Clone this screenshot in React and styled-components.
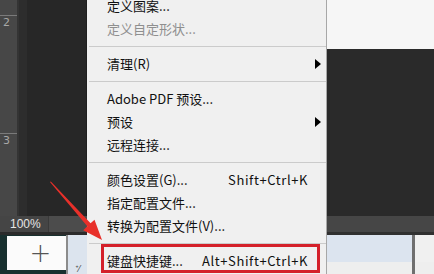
import React from "react";
import styled, { createGlobalStyle } from "styled-components";

const Global = createGlobalStyle`
  html, body { margin: 0; padding: 0; background: #262626; }
  #root { width: 434px; height: 274px; }
`;

const Screen = styled.div`
  position: relative;
  width: 434px;
  height: 274px;
  overflow: hidden;
  display: grid;
  grid-template-columns: 87px 240px 107px;
  font-family: "Noto Sans CJK SC", "Noto Sans", sans-serif;
`;

const LeftCol = styled.div`
  display: grid;
  grid-template-rows: 216px 16px 3px 1fr;
`;

const Workspace = styled.div`
  display: grid;
  grid-template-columns: 17px 2px 1fr 1px;
`;

const Ruler = styled.div`
  position: relative;
  background:
    repeating-linear-gradient(to bottom, transparent 0 11px, #6a6a6a 11px 12px) right 0 top 3px / 4px 100% no-repeat,
    #474747;
`;

const RulerMark = styled.div`
  height: ${(p) => p.$gap}px;
  border-top: 1px solid #7a7a7a;
  padding: 1px 0 0 3px;
  font-family: "DejaVu Sans", sans-serif;
  font-size: 11px;
  line-height: 11px;
  color: #a8a8a8;
  box-sizing: border-box;
`;

const RulerInner = styled.div`
  display: flex;
  flex-direction: column;
  padding-top: 15px;
  background: #474747;
  height: 100%;
  box-sizing: border-box;
`;

const Seam = styled.div`
  background: ${(p) => p.$c};
`;

const Canvas = styled.div`
  background: linear-gradient(to right, #2d2d2d 0 8px, #272727 8px);
`;

const StatusBar = styled.div`
  display: grid;
  grid-template-columns: 48px 1fr;
  background: #404040;
`;

const Zoom = styled.div`
  display: flex;
  align-items: center;
  padding-left: 10px;
  font-family: "Liberation Sans", sans-serif;
  font-size: 12px;
  color: #e6e6e6;
  background: #454545;
`;

const StatusBox = styled.div`
  background: #4c4c4c;
  border-left: 1px solid #3a3a3a;
`;

const Dock = styled.div`
  display: grid;
  grid-template-columns: 7px 59px 2px 1fr;
  background: #18302f;
`;

const NewTab = styled.div`
  margin: 1px 0 4px;
  background: #fbfbfb;
  display: flex;
  align-items: center;
  justify-content: center;
  padding-left: 8px;
  font-family: "DejaVu Sans", sans-serif;
  font-weight: 200;
  font-size: 26px;
  line-height: 1;
  color: #555;
`;

const Thumb = styled.div`
  background: #dce4ee;
  display: flex;
  align-items: flex-end;
  justify-content: center;
  font-size: 9px;
  color: #444;
  line-height: 10px;
`;

const Menu = styled.div`
  margin-top: -6px;
  background: #f0f0f0;
  border-right: 1px solid #a7a7a7;
  display: flex;
  flex-direction: column;
`;

const Item = styled.div`
  position: relative;
  height: 23px;
  display: flex;
  align-items: center;
  padding: 0 18px 0 20px;
  font-size: 13px;
  color: ${(p) => (p.$disabled ? "#8f8f8f" : "#111")};
  white-space: nowrap;

  ${(p) =>
    p.$boxed &&
    `
    &::after {
      content: "";
      position: absolute;
      left: 14px;
      right: 6px;
      top: -5px;
      bottom: -1px;
      border: 3px solid #d4202a;
    }
  `}
`;

const Label = styled.span`
  flex: 1;
`;

const Shortcut = styled.span`
  letter-spacing: 0.6px;
`;

const SubArrow = styled.span`
  width: 0;
  height: 0;
  margin-right: -13px;
  border-top: 5px solid transparent;
  border-bottom: 5px solid transparent;
  border-left: 6px solid #000;
`;

const Separator = styled.div`
  height: 12px;
  display: flex;
  align-items: center;
  padding-left: 2px;
  &::before {
    content: "";
    flex: 1;
    height: 1px;
    background: #cbcbcb;
  }
`;

const RightCol = styled.div`
  display: grid;
  grid-template-rows: 49px 167px 16px 3px 27px 1fr;
`;

const Fill = styled.div`
  background: ${(p) => p.$c};
`;

const Tray = styled.div`
  display: grid;
  grid-template-columns: 85px 3px 1fr;
`;

const Annotation = styled.svg`
  position: absolute;
  left: 0;
  top: 0;
  pointer-events: none;
`;

const items = [
  { label: "定义图案..." },
  { label: "定义自定形状...", disabled: true },
  { sep: true },
  { label: "清理(R)", sub: true },
  { sep: true },
  { label: "Adobe PDF 预设..." },
  { label: "预设", sub: true },
  { label: "远程连接..." },
  { sep: true },
  { label: "颜色设置(G)...", shortcut: "Shift+Ctrl+K" },
  { label: "指定配置文件..." },
  { label: "转换为配置文件(V)..." },
  { sep: true },
  { label: "键盘快捷键...", shortcut: "Alt+Shift+Ctrl+K", boxed: true },
];

export default function App() {
  return (
    <>
      <Global />
      <Screen>
        <LeftCol>
          <Workspace>
            <RulerInner>
              <RulerMark $gap={118}>2</RulerMark>
              <RulerMark $gap={90}>3</RulerMark>
            </RulerInner>
            <Seam $c="#343434" />
            <Canvas />
            <Seam $c="#1f1f1f" />
          </Workspace>
          <StatusBar>
            <Zoom>100%</Zoom>
            <StatusBox />
          </StatusBar>
          <Seam $c="#2b2b2b" />
          <Dock>
            <div />
            <NewTab>+</NewTab>
            <Seam $c="#8c8c8c" />
            <Thumb>⁺⁄</Thumb>
          </Dock>
        </LeftCol>

        <Menu>
          {items.map((it, i) =>
            it.sep ? (
              <Separator key={i} />
            ) : (
              <Item key={i} $disabled={it.disabled} $boxed={it.boxed}>
                <Label>{it.label}</Label>
                {it.shortcut && <Shortcut>{it.shortcut}</Shortcut>}
                {it.sub && <SubArrow />}
              </Item>
            )
          )}
        </Menu>

        <RightCol>
          <Fill $c="#f6f6f6" />
          <Fill $c="#2a2a2a" />
          <Fill $c="#464646" />
          <Fill $c="#303030" />
          <Tray>
            <Fill $c="#dce4ef" />
            <Fill $c="#6f6f6f" />
            <Fill $c="#f0f0f0" />
          </Tray>
          <Tray>
            <Fill $c="#eeeeee" />
            <Fill $c="#6f6f6f" />
            <Fill $c="#eeeeee" />
          </Tray>
        </RightCol>

        <Annotation width="434" height="274" viewBox="0 0 434 274">
          <polygon
            points="50,182 50.8,181.4 90.6,223.3 94.5,219.8 102,240 83.2,230.2 87.3,226.3"
            fill="#e8302a"
          />
        </Annotation>
      </Screen>
    </>
  );
}
